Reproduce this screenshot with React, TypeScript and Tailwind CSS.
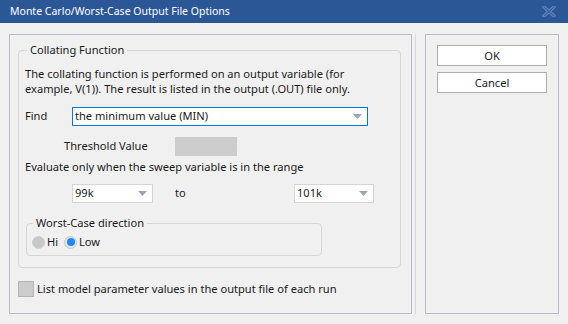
import React from "react"

const font = { fontFamily: '"Noto Sans", "Open Sans", sans-serif' }

function Arrow() {
  return (
    <svg width="9" height="5" viewBox="0 0 9 5" className="shrink-0">
      <path d="M0 0 H9 L4.5 5 Z" fill="#9aa6c0" />
    </svg>
  )
}

function Combo({ value, className }: { value: string; className: string }) {
  return (
    <div className={`flex items-center justify-between bg-white pl-[2px] pr-[5px] ${className}`}>
      <span>{value}</span>
      <Arrow />
    </div>
  )
}

export default function App() {
  return (
    <div className="w-[568px] h-[324px] bg-[#f0f0f0] text-[11.1px] text-[#1a1a1a] flex flex-col overflow-hidden" style={font}>
      {/* Title bar */}
      <div className="h-[23px] bg-[#2b5797] flex items-center justify-between pl-[10px] pr-[12px] text-white shrink-0">
        <span className="text-[10.5px] leading-none">Monte Carlo/Worst-Case Output File Options</span>
        <svg width="14" height="11" viewBox="0 0 14 11">
          <path d="M2 1 L12 10 M12 1 L2 10" stroke="#6f8ac0" strokeWidth="3.2" strokeLinecap="round" />
          <path d="M2 1 L12 10 M12 1 L2 10" stroke="#34609f" strokeWidth="1.2" strokeLinecap="round" />
        </svg>
      </div>

      <div className="flex pt-[11px]">
        {/* Left panel */}
        <div className="ml-[9px] w-[403px] h-[280px] border border-[#b8bcc8] pl-[8px] pr-[10px] flex flex-col">
          <fieldset className="mt-[7px] h-[226px] border border-[#d6d6d6] rounded-[4px] pl-[6px] pr-[6px]">
            <legend className="ml-[2px] px-[3px] leading-[16px]">Collating Function</legend>
            <p className="mt-[8px] leading-[15px] whitespace-nowrap">
              The collating function is performed on an output variable (for
              <br />
              example, V(1)). The result is listed in the output (.OUT) file only.
            </p>

            <div className="flex items-center mt-[11px] h-[19px]">
              <span className="w-[47px]">Find</span>
              <div className="w-[296px] h-[19px] border border-[#0078d7] bg-white flex items-center justify-between pl-[2px] pr-[5px]">
                <span>the minimum value (MIN)</span>
                <Arrow />
              </div>
            </div>

            <div className="flex items-center mt-[11px] h-[19px]">
              <span className="ml-[39px] w-[111px]">Threshold Value</span>
              <div className="w-[62px] h-[19px] bg-[#cccccc]" />
            </div>

            <div className="mt-[3px] leading-[16px]">Evaluate only when the sweep variable is in the range</div>

            <div className="flex items-center mt-[9px] h-[19px]">
              <Combo value="99k" className="ml-[47px] w-[81px] h-[19px] border border-[#d4d4d4]" />
              <span className="ml-[22px] w-[119px]">to</span>
              <Combo value="101k" className="w-[80px] h-[19px] border border-[#d4d4d4]" />
            </div>

            <fieldset className="mt-[12px] ml-[1px] w-[296px] h-[41px] border border-[#d6d6d6] rounded-[4px] pl-[5px]">
              <legend className="ml-[1px] px-[3px] leading-[16px]">Worst-Case direction</legend>
              <div className="flex items-center mt-[3px] h-[16px]">
                <span className="w-[13px] h-[13px] rounded-full bg-[#c8c8c8] border border-[#d0d0d0]" />
                <span className="ml-[2px] w-[17px]">Hi</span>
                <span className="w-[13px] h-[13px] rounded-full bg-[#e4e4e4] border border-[#c8c8c8] flex items-center justify-center">
                  <span className="w-[8px] h-[8px] rounded-full bg-[#1a8cff]" />
                </span>
                <span className="ml-[2px]">Low</span>
              </div>
            </fieldset>
          </fieldset>

          <div className="flex items-center mt-[13px] h-[16px]">
            <span className="w-[16px] h-[16px] bg-[#cccccc] border border-[#b4b4b4]" />
            <span className="ml-[3px]">List model parameter values in the output file of each run</span>
          </div>
        </div>

        {/* Separator */}
        <div className="ml-[3px] w-px h-[280px] bg-[#d8d8dc]" />

        {/* Right panel */}
        <div className="ml-[9px] w-[134px] h-[280px] border border-[#b8bcc8] flex flex-col items-center pt-[10px] gap-[6px]">
          <button className="w-[110px] h-[21px] bg-white border border-[#adadad] leading-none">OK</button>
          <button className="w-[110px] h-[21px] bg-white border border-[#adadad] leading-none">Cancel</button>
        </div>
      </div>
    </div>
  )
}
